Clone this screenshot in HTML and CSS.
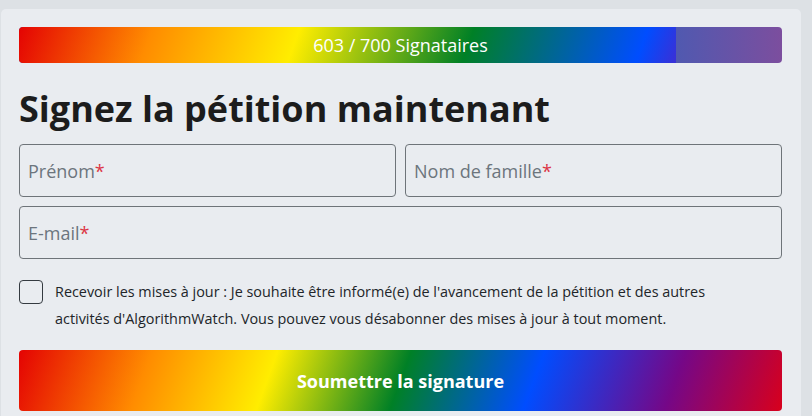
FILE: index.html
```html
<!DOCTYPE html>
<html lang="fr">
  <head>
    <meta charset="UTF-8" />
    <meta name="viewport" content="width=device-width, initial-scale=1.0" />
    <title>Signez la pétition</title>
    <link rel="stylesheet" href="styles.css">
  </head>
  <body>
    <div class="card">
      <div class="progress">
        <div class="progress-fill" style="width: 86.14%"></div>
        <span class="progress-label">603 / 700 Signataires</span>
      </div>

      <h2 class="title">Signez la pétition maintenant</h2>

      <form class="form">
        <div class="row">
          <label class="field"><span>Prénom</span><span class="req">*</span></label>
          <label class="field"><span>Nom de famille</span><span class="req">*</span></label>
        </div>
        <label class="field"><span>E-mail</span><span class="req">*</span></label>

        <div class="consent">
          <span class="checkbox"></span>
          <p>Recevoir les mises à jour : Je souhaite être informé(e) de l'avancement de la pétition et des autres activités d'AlgorithmWatch. Vous pouvez vous désabonner des mises à jour à tout moment.</p>
        </div>

        <button class="submit" type="button">Soumettre la signature</button>
      </form>
    </div>
  </body>
</html>
```

FILE: styles.css
```css
/* page */
body {
  margin: 0;
  padding: 9px 11px 0 1px;
  background-color: #dde1e5;
  font-family: "Open Sans", "Noto Sans", sans-serif;
  color: #212529;
}

.card {
  background-color: #e9ecf0;
  border-radius: 5px;
  padding: 18px 19px 40px 18px;
}

/* barre de progression */
.progress {
  position: relative;
  height: 36px;
  border-radius: 4px;
  overflow: hidden;
  background: linear-gradient(to right, #5059b0 86.14%, #7c4e9e 100%);
  display: flex;
  align-items: center;
  justify-content: center;
}
.progress-fill {
  position: absolute;
  left: 0;
  top: 0;
  bottom: 0;
  background: linear-gradient(110deg, #e40303 0%, #ff8c00 20%, #ffed00 42%, #008026 68%, #004dff 94%, #3b2fd6 100%);
}
.progress-label {
  position: relative;
  color: #fff;
  font-size: 18px;
}

.title {
  font-size: 36px;
  line-height: 40px;
  font-weight: 700;
  margin: 26px 0 15px;
  color: #1c1c1c;
}

/* formulaire */
.form {
  display: flex;
  flex-direction: column;
  gap: 9px;
}
.row {
  display: grid;
  grid-template-columns: 1fr 1fr;
  gap: 9px;
}
.field {
  height: 53px;
  box-sizing: border-box;
  border: 1px solid #6e7479;
  border-radius: 4px;
  padding: 0 8px;
  display: flex;
  align-items: center;
  font-size: 18px;
  color: #6c757d;
}
.req {
  color: #dc3545;
}

.consent {
  display: flex;
  gap: 12px;
  margin-top: 10px;
}
.checkbox {
  flex: none;
  width: 24px;
  height: 24px;
  box-sizing: border-box;
  border: 1px solid #343a40;
  border-radius: 4px;
  margin-top: 2px;
}
.consent p {
  margin: 0;
  font-size: 14.4px;
  line-height: 27px;
  padding-right: 40px;
}

.submit {
  margin-top: 9px;
  height: 61px;
  border: none;
  border-radius: 4px;
  background: linear-gradient(110deg, #e40303 0%, #ff8c00 17%, #ffed00 33%, #008026 50%, #004dff 67%, #750787 85%, #d8001c 100%);
  color: #fff;
  font-family: "Open Sans", sans-serif;
  font-size: 18px;
  font-weight: 700;
}
```
